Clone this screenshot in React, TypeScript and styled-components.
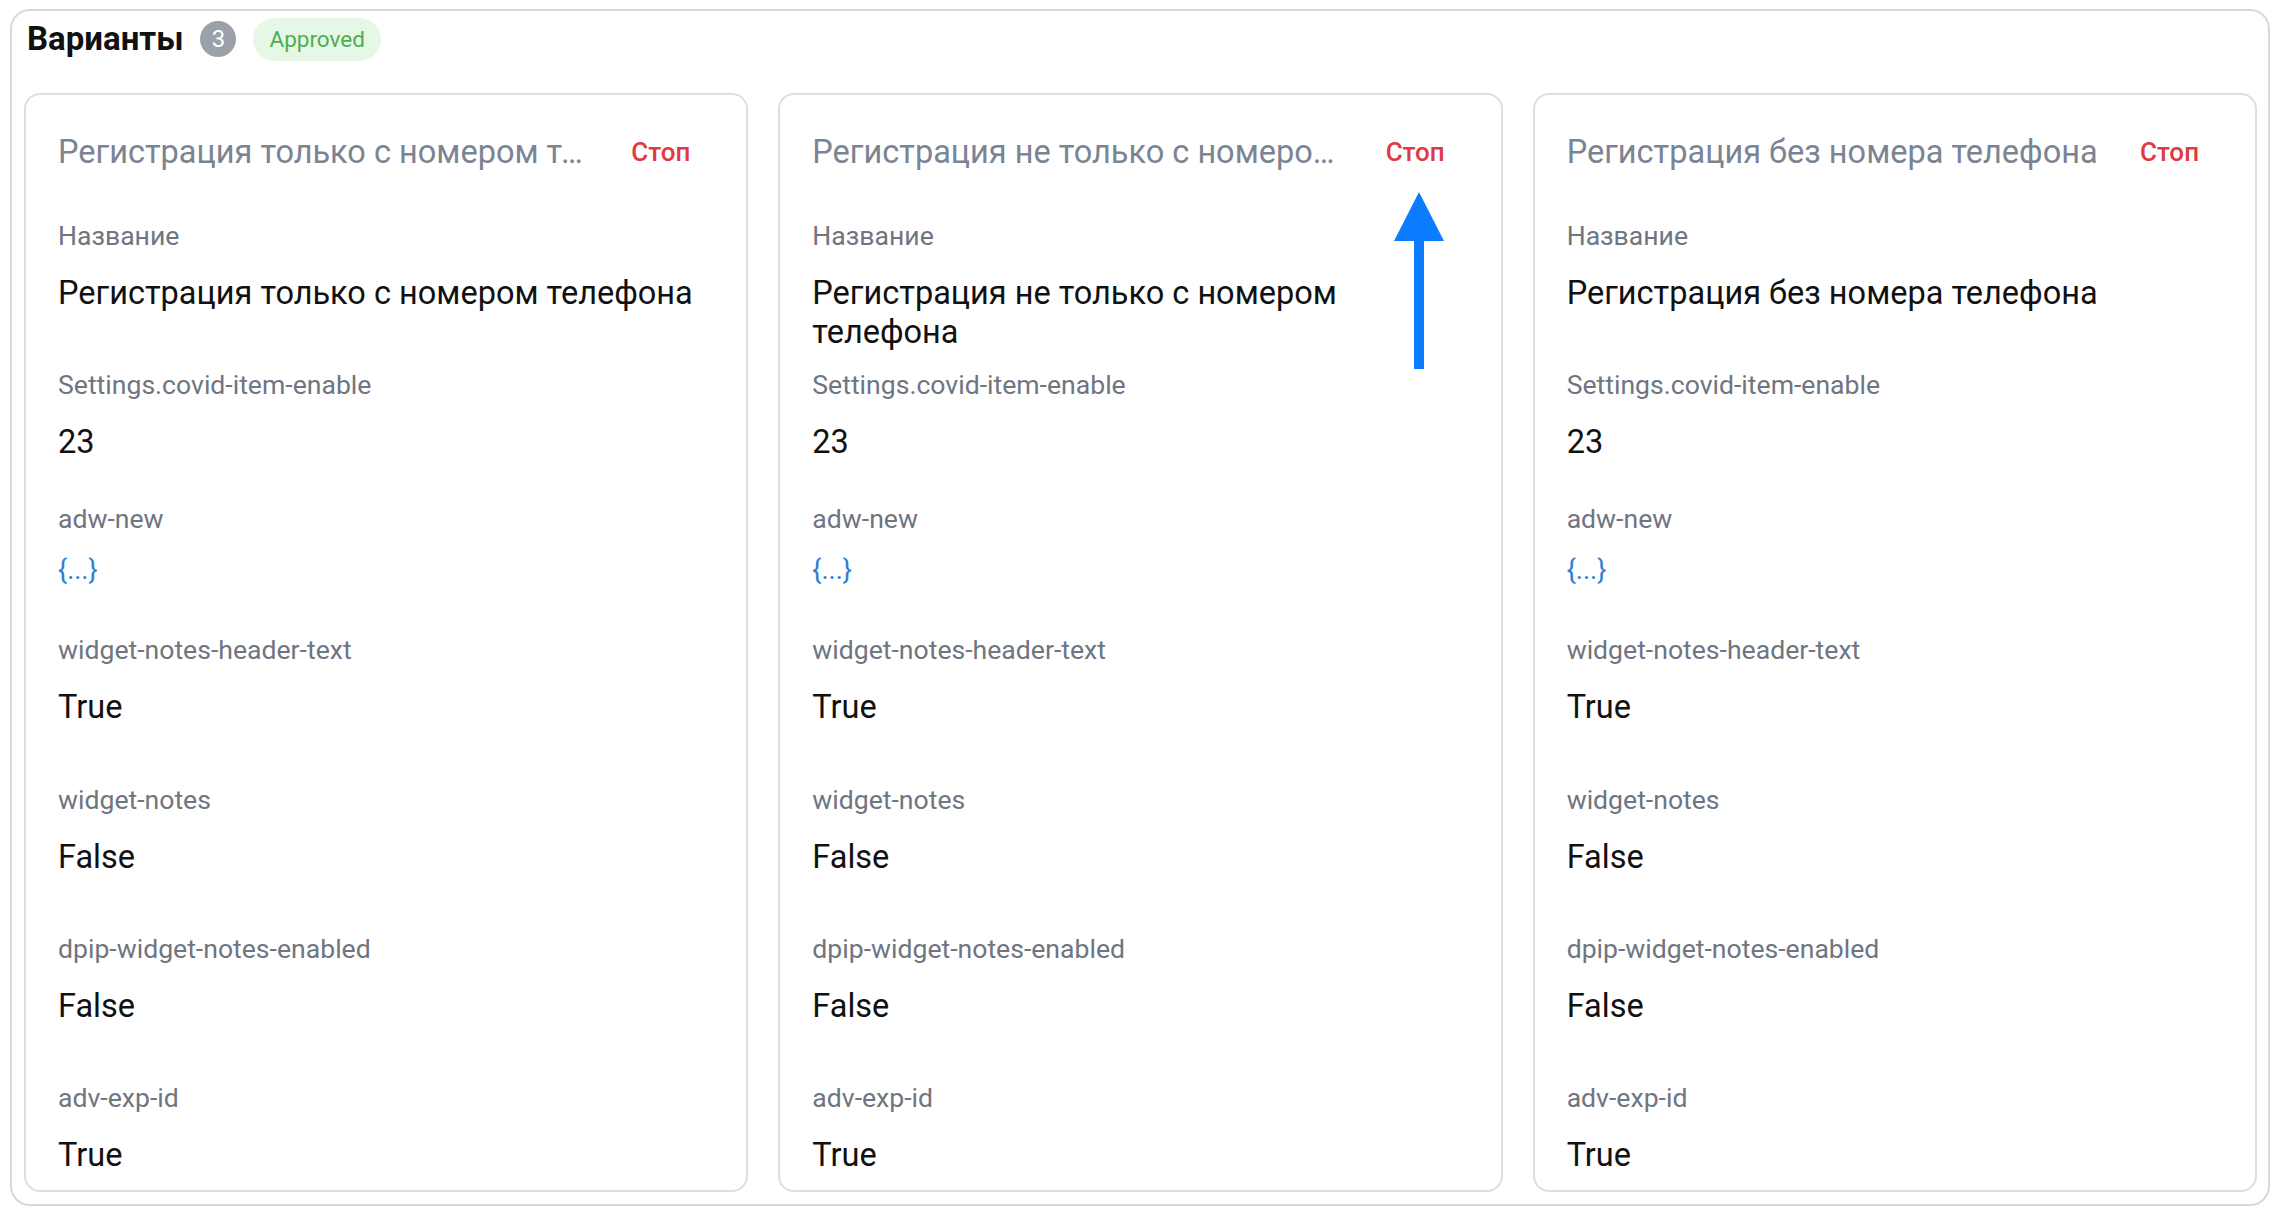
import React from "react";
import styled, { createGlobalStyle } from "styled-components";

const GlobalStyle = createGlobalStyle`
  html, body {
    margin: 0;
    padding: 0;
    background: #ffffff;
  }

  body {
    font-family: Roboto, "Noto Sans", "Liberation Sans", sans-serif;
    color: #111111;
  }

  * {
    box-sizing: border-box;
  }
`;

type FieldData = {
  label: string;
  value: string;
  height?: number;
  link?: boolean;
};

type Variant = {
  title: string;
  fields: FieldData[];
};

const makeFields = (name: string): FieldData[] => [
  { label: "Название", value: name, height: 149 },
  { label: "Settings.covid-item-enable", value: "23", height: 134 },
  { label: "adw-new", value: "{...}", height: 131, link: true },
  { label: "widget-notes-header-text", value: "True", height: 150 },
  { label: "widget-notes", value: "False", height: 149 },
  { label: "dpip-widget-notes-enabled", value: "False", height: 149 },
  { label: "adv-exp-id", value: "True" },
];

const variants: Variant[] = [
  {
    title: "Регистрация только с номером телефона",
    fields: makeFields("Регистрация только с номером телефона"),
  },
  {
    title: "Регистрация не только с номером телефона",
    fields: makeFields("Регистрация не только с номером телефона"),
  },
  {
    title: "Регистрация без номера телефона",
    fields: makeFields("Регистрация без номера телефона"),
  },
];

const Section = styled.section`
  margin: 9px 10px 7px;
  border: 2px solid #d9d9d9;
  border-radius: 20px;
  padding: 0 11px 12px 12px;
`;

const SectionHeader = styled.header`
  display: flex;
  align-items: center;
  gap: 17px;
  height: 48px;
  padding: 8px 3px 0;
  margin-bottom: 34px;
`;

const SectionTitle = styled.h2`
  margin: 0;
  font-size: 33px;
  line-height: 40px;
  font-weight: 700;
  color: #111111;
`;

const CountBadge = styled.span`
  display: inline-flex;
  align-items: center;
  justify-content: center;
  width: 36px;
  height: 36px;
  border-radius: 50%;
  background: #9ba1a9;
  color: #ffffff;
  font-size: 24px;
`;

const StatusPill = styled.span`
  display: inline-flex;
  align-items: center;
  height: 43px;
  padding: 0 16px;
  border-radius: 22px;
  background: #e6f7e6;
  color: #4cae4f;
  font-size: 22.5px;
`;

const CardGrid = styled.div`
  display: grid;
  grid-template-columns: repeat(3, minmax(0, 1fr));
  gap: 30px;
`;

const Card = styled.article`
  position: relative;
  border: 2px solid #dedede;
  border-radius: 16px;
  padding: 37px 32px 15px;
`;

const CardHeader = styled.div`
  display: flex;
  align-items: center;
  height: 40px;
  margin-bottom: 46px;
`;

const CardTitle = styled.h3`
  flex: 1;
  min-width: 0;
  margin: 0;
  overflow: hidden;
  white-space: nowrap;
  text-overflow: ellipsis;
  font-size: 32.5px;
  line-height: 40px;
  font-weight: 400;
  color: #7b8493;
`;

const StopButton = styled.button`
  flex: none;
  margin: 0 24px 0 40px;
  padding: 0;
  border: 0;
  background: transparent;
  font-family: inherit;
  font-size: 26px;
  line-height: 40px;
  font-weight: 500;
  color: #de3a3f;
  cursor: pointer;
`;

const Field = styled.div<{ $height?: number }>`
  display: flex;
  flex-direction: column;
  gap: 20px;
  min-height: ${(p) => (p.$height ? `${p.$height}px` : "auto")};
`;

const FieldLabel = styled.div`
  font-size: 26.6px;
  line-height: 36px;
  color: #6f7581;
`;

const FieldValue = styled.div`
  font-size: 32.5px;
  line-height: 39px;
  color: #111111;
`;

const JsonLink = styled.a`
  align-self: flex-start;
  font-size: 27px;
  line-height: 26px;
  color: #2f80d4;
  text-decoration: none;
  cursor: pointer;
`;

const PointerArrow = styled.svg`
  position: absolute;
  left: 614px;
  top: 97px;
  pointer-events: none;
`;

export default function App() {
  return (
    <>
      <GlobalStyle />
      <Section>
        <SectionHeader>
          <SectionTitle>Варианты</SectionTitle>
          <CountBadge>3</CountBadge>
          <StatusPill>Approved</StatusPill>
        </SectionHeader>

        <CardGrid>
          {variants.map((variant, index) => (
            <Card key={variant.title}>
              <CardHeader>
                <CardTitle>{variant.title}</CardTitle>
                <StopButton type="button">Стоп</StopButton>
              </CardHeader>

              {variant.fields.map((field) => (
                <Field key={field.label} $height={field.height}>
                  <FieldLabel>{field.label}</FieldLabel>
                  {field.link ? (
                    <JsonLink>{field.value}</JsonLink>
                  ) : (
                    <FieldValue>{field.value}</FieldValue>
                  )}
                </Field>
              ))}

              {index === 1 && (
                <PointerArrow width="50" height="177" viewBox="0 0 50 177">
                  <polygon points="25,0 50,49 0,49" fill="#0b7bff" />
                  <rect x="20" y="48" width="10" height="129" fill="#0b7bff" />
                </PointerArrow>
              )}
            </Card>
          ))}
        </CardGrid>
      </Section>
    </>
  );
}
